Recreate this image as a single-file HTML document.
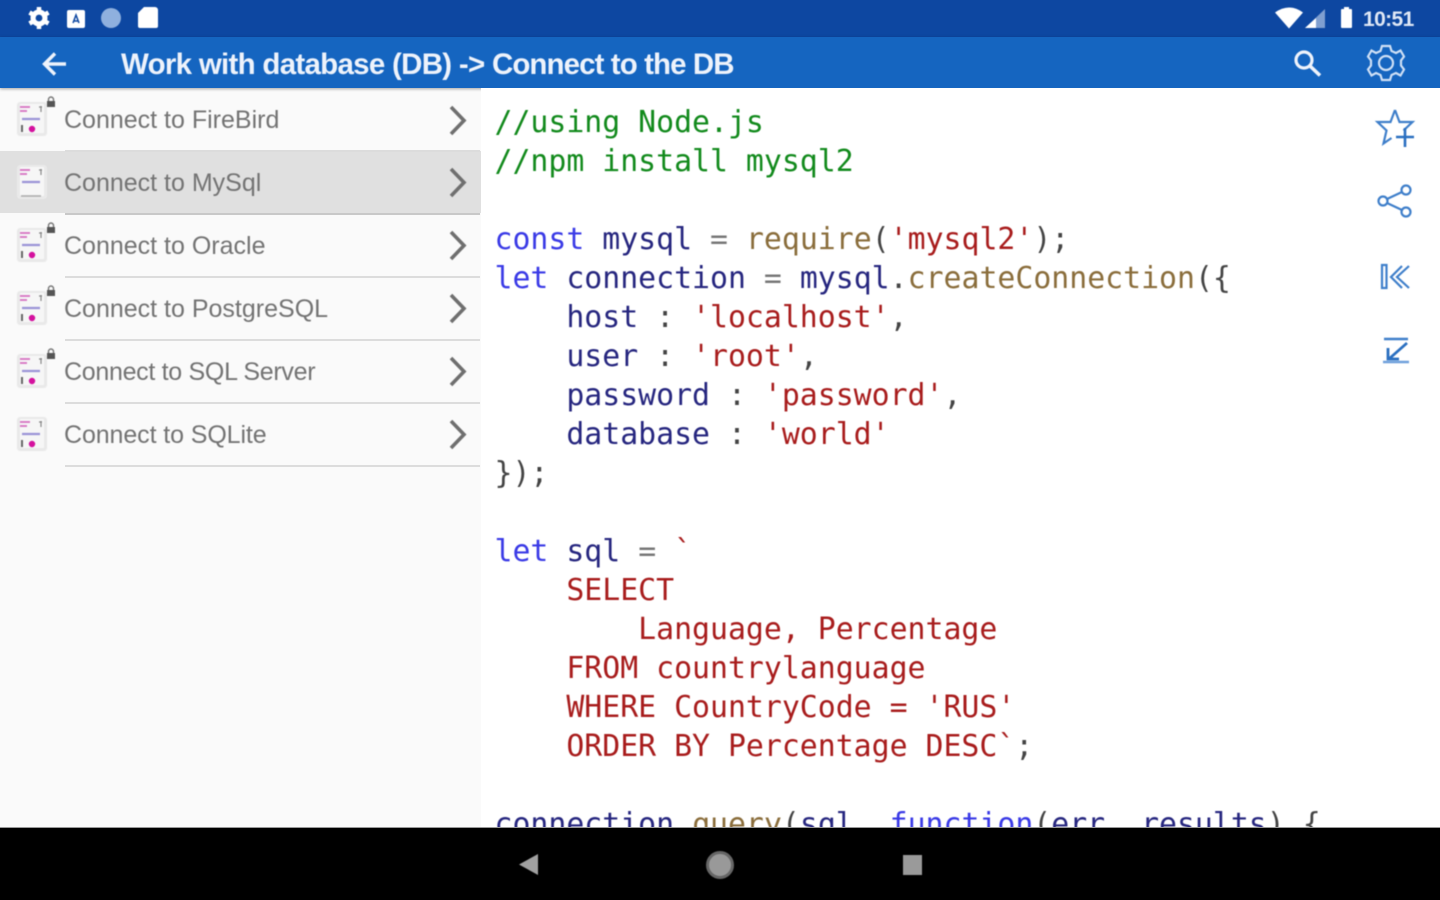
<!DOCTYPE html>
<html><head><meta charset="utf-8"><style>
html,body{margin:0;padding:0;width:1440px;height:900px;overflow:hidden;background:#fff}
*{box-sizing:border-box}
.abs{position:absolute}
#status{left:0;top:0;width:1440px;height:37px;background:#0d47a1}
#bar{left:0;top:37px;width:1440px;height:51px;background:#1565c0;box-shadow:0 1px 3px rgba(0,0,0,.35)}
#title{left:121px;top:46px;font:bold 29.5px/38px "Liberation Sans",sans-serif;color:#eef3fb;white-space:nowrap;letter-spacing:-.72px;filter:blur(.5px)}
#title span{letter-spacing:-.92px}
#time{left:1363px;top:7px;font:bold 21px/25px "Liberation Sans",sans-serif;color:#e0e8f5;letter-spacing:-.6px;filter:blur(.5px)}
#left{left:0;top:88px;width:481px;height:740px;background:#fafafa}
.sel{left:0;top:151px;width:481px;height:62px;background:#e0e0e0}
.div{left:65px;width:415px;height:2px;background:#dcdcdc}
.row{left:64px;font:25px/32px "Liberation Sans",sans-serif;color:#737373;white-space:nowrap;filter:blur(.55px)}
#clip{left:481px;top:88px;width:959px;height:739px;overflow:hidden;background:#fff}
#code{left:13.5px;top:15px;margin:0;font:29.84px/39px "DejaVu Sans Mono",monospace;color:#444;white-space:pre;filter:blur(.65px)}
.g{color:#128a1c}.b{color:#3a3ae6}.n{color:#26267f}.y{color:#8a6d3b}.r{color:#a81c1c}.e{color:#777}
#nav{left:0;top:827px;width:1440px;height:73px;background:#000;border-top:1px solid #999}
svg{position:absolute;overflow:visible}
</style></head><body>
<div class="abs" id="status"></div>
<div class="abs" id="left"></div>
<div class="abs sel"></div>
<div class="abs div" style="top:150px"></div>
<div class="abs div" style="top:213px;background:#c8c8c8"></div>
<div class="abs div" style="top:276px"></div>
<div class="abs div" style="top:339px"></div>
<div class="abs div" style="top:402px"></div>
<div class="abs div" style="top:465px"></div>
<div class="abs" id="bar"></div>

<div class="abs" id="clip"><pre class="abs" id="code"><span class="g">//using Node.js
//npm install mysql2</span>

<span class="b">const</span> <span class="n">mysql</span> <span class="e">=</span> <span class="y">require</span>(<span class="r">'mysql2'</span>);
<span class="b">let</span> <span class="n">connection</span> <span class="e">=</span> <span class="n">mysql</span>.<span class="y">createConnection</span>({
    <span class="n">host</span> : <span class="r">'localhost'</span>,
    <span class="n">user</span> : <span class="r">'root'</span>,
    <span class="n">password</span> : <span class="r">'password'</span>,
    <span class="n">database</span> : <span class="r">'world'</span>
});

<span class="b">let</span> <span class="n">sql</span> <span class="e">=</span> <span class="r">`</span>
    <span class="r">SELECT</span>
        <span class="r">Language, Percentage</span>
    <span class="r">FROM countrylanguage</span>
    <span class="r">WHERE CountryCode = 'RUS'</span>
    <span class="r">ORDER BY Percentage DESC`</span>;

<span class="n">connection</span>.<span class="y">query</span>(<span class="n">sql</span>, <span class="b">function</span>(<span class="n">err</span>, <span class="n">results</span>) {</pre></div>
<div class="abs" id="nav"></div>

<div class="abs" id="title">Work with database (DB) -&gt; <span>Connect to the DB</span></div>
<div class="abs" id="time">10:51</div>

<div class="abs row" style="top:104px">Connect to FireBird</div>
<div class="abs row" style="top:167px">Connect to MySql</div>
<div class="abs row" style="top:230px">Connect to Oracle</div>
<div class="abs row" style="top:293px">Connect to PostgreSQL</div>
<div class="abs row" style="top:356px;letter-spacing:-.3px">Connect to SQL Server</div>
<div class="abs row" style="top:419px;letter-spacing:-.1px">Connect to SQLite</div>

<svg width="1440" height="900" style="left:0;top:0" viewBox="0 0 1440 900">
<defs>
<g id="doc">
<rect x="0" y="0" width="30" height="34" rx="3" fill="#e9e9e9"/>
<rect x="3" y="2" width="24" height="29" fill="#f6f6f6"/>
<path d="M3 5h10M3 9h7" stroke="#d66fc0" stroke-width="1.8"/>
<path d="M22 5h3M24 4v6" stroke="#888" stroke-width="1.2"/>
<path d="M5 17h18" stroke="#9a94d6" stroke-width="2.200"/>
<path d="M5 23v7" stroke="#666" stroke-width="2"/>
<circle cx="15" cy="27" r="3.200" fill="#d4119e"/>
</g>
<g id="doc2">
<rect x="0" y="0" width="30" height="34" rx="3" fill="#e9e9e9"/>
<rect x="3" y="2" width="24" height="29" fill="#f6f6f6"/>
<path d="M3 5h10M3 9h7" stroke="#d66fc0" stroke-width="1.8"/>
<path d="M22 5h3M24 4v6" stroke="#888" stroke-width="1.2"/>
<path d="M5 17h18" stroke="#9a94d6" stroke-width="2.200"/>
<path d="M4 31h20" stroke="#aaa" stroke-width="1.4"/>
</g>
<g id="lock"><rect x="0" y="4" width="8" height="6" fill="#555"/><path d="M1.5 4V2.500a2.500 2.500 0 0 1 5 0V4" fill="none" stroke="#777" stroke-width="1.400"/></g>
<path id="chev" d="M0 0l13 13.500L0 27" fill="none" stroke="#6f6f6f" stroke-width="3.600"/>
</defs>
<g style="filter:blur(.6px)">
<use href="#doc" x="17" y="102"/><use href="#lock" x="47" y="97"/>
<use href="#doc2" x="17" y="165"/>
<use href="#doc" x="17" y="228"/><use href="#lock" x="47" y="223"/>
<use href="#doc" x="17" y="291"/><use href="#lock" x="47" y="286"/>
<use href="#doc" x="17" y="354"/><use href="#lock" x="47" y="349"/>
<use href="#doc" x="17" y="417"/>
<use href="#chev" x="451" y="107"/><use href="#chev" x="451" y="169"/><use href="#chev" x="451" y="232"/><use href="#chev" x="451" y="295"/><use href="#chev" x="451" y="358"/><use href="#chev" x="451" y="421"/>

<!-- status left -->
<g fill="#fff">
<circle cx="39" cy="18" r="8.500"/>
<path d="M39 7v22M29.500 12.500l19 11M29.500 23.500l19-11" stroke="#fff" stroke-width="4.500"/>
<circle cx="39" cy="18" r="3.400" fill="#0d47a1"/>
<rect x="67" y="10" width="18" height="18" rx="2"/>
<path d="M73 23l3-8 3 8M74 21h4" stroke="#0d47a1" stroke-width="1.500" fill="none"/>
<circle cx="111" cy="18" r="10" fill="#8fb0de"/>
<path d="M144 7h11a3 3 0 0 1 3 3v16a2 2 0 0 1-2 2h-16a2 2 0 0 1-2-2V13z"/>
<!-- status right -->
<path d="M1275 12.500q14-10 28 0l-14 16z"/>
<path d="M1305 28l20-19v19z" fill="#7f9fd0"/><path d="M1305 28l11-10v10z"/>
<path d="M1342 9h2V7h5v2h2a1 1 0 0 1 1 1v17a1 1 0 0 1-1 1h-9a1 1 0 0 1-1-1V10a1 1 0 0 1 1-1z"/>
</g>
<!-- back -->
<path d="M66 64H45M55 53.500L44.500 64 55 74.500" fill="none" stroke="#eef3fb" stroke-width="3.400"/>
<!-- search -->
<circle cx="1304" cy="60" r="8" fill="none" stroke="#eef3fb" stroke-width="3.200"/>
<path d="M1310 66l10 9.500" stroke="#eef3fb" stroke-width="3.600" fill="none"/>
<!-- gear -->
<g fill="none" stroke="#cfe0f5" stroke-width="2.200">
<circle cx="1386" cy="63" r="7"/>
<path d="M1382 46h8l1.500 5 4.500 2 4.500-2.500 3.500 6-3 4v5l3 4-3.500 6-4.500-2.500-4.500 2-1.500 5h-8l-1.500-5-4.500-2-4.500 2.500-3.500-6 3-4v-5l-3-4 3.500-6 4.500 2.500 4.500-2z"/>
</g>
<!-- side icons -->
<g fill="none" stroke="#3f7fca" stroke-width="2.200">
<path d="M1395 110l4.500 12h13l-9 8.500M1395 110l-4.500 12h-13l9 8.500-3 13 8-5.500"/>
<path d="M1405 128v19M1396 137h18" stroke="#2a6fc0" stroke-width="2.600"/>
<circle cx="1383" cy="201" r="4.500"/><circle cx="1406" cy="190" r="4.500"/><circle cx="1406" cy="212" r="4.500"/>
<path d="M1387 199l15-7M1387 203l15 7"/>
<rect x="1382" y="265" width="4.500" height="23"/>
<path d="M1409 266l-12 11 12 11M1402 266l-11 11 11 11" stroke-width="2.200"/>
<path d="M1384 339h24" stroke-width="2.600"/>
<path d="M1407 343l-17 15M1388 348v11h11" stroke-width="2.800" stroke="#2a6fc0"/>
<path d="M1383 362h26" stroke-width="2.600" stroke="#6fa0dc"/>
</g>
<!-- nav -->
<path d="M538 854v21l-19-10.500z" fill="#a0a0a0"/>
<circle cx="720" cy="865" r="12.500" fill="#999" stroke="#666" stroke-width="3"/>
<rect x="903" y="855" width="19" height="20" fill="#9a9a9a"/>
</g>
</svg>
</body></html>
